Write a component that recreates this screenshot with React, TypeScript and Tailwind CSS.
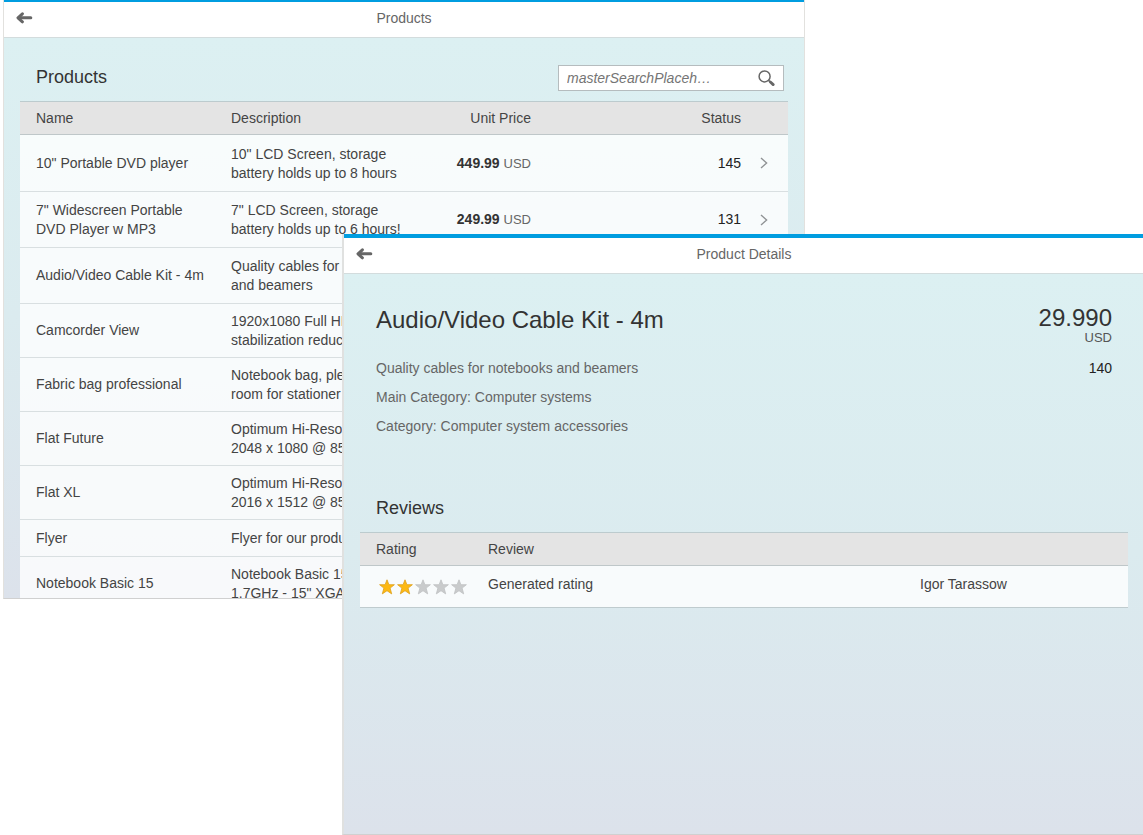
import type { ReactNode } from "react";

type Product = {
  name: string[];
  description: string[];
  price?: string;
  status?: number;
  height: string;
};

const products: Product[] = [
  { name: ['10" Portable DVD player'], description: ['10" LCD Screen, storage', "battery holds up to 8 hours"], price: "449.99", status: 145, height: "h-[57px]" },
  { name: ['7" Widescreen Portable', "DVD Player w MP3"], description: ['7" LCD Screen, storage', "battery holds up to 6 hours!"], price: "249.99", status: 131, height: "h-[56px]" },
  { name: ["Audio/Video Cable Kit - 4m"], description: ["Quality cables for", "and beamers"], height: "h-[56px]" },
  { name: ["Camcorder View"], description: ["1920x1080 Full HD", "stabilization reduc"], height: "h-[54px]" },
  { name: ["Fabric bag professional"], description: ["Notebook bag, ple", "room for stationer"], height: "h-[54px]" },
  { name: ["Flat Future"], description: ["Optimum Hi-Reso", "2048 x 1080 @ 85"], height: "h-[54px]" },
  { name: ["Flat XL"], description: ["Optimum Hi-Reso", "2016 x 1512 @ 85"], height: "h-[54px]" },
  { name: ["Flyer"], description: ["Flyer for our produ"], height: "h-[37px]" },
  { name: ["Notebook Basic 15"], description: ["Notebook Basic 15", '1.7GHz - 15" XGA'], height: "h-[54px]" },
];

function Lines({ lines }: { lines: string[] }) {
  return (
    <>
      {lines.map((line) => (
        <span key={line} className="block whitespace-nowrap">{line}</span>
      ))}
    </>
  );
}

function BackArrow() {
  return (
    <svg width="17" height="12" viewBox="0 0 17 12" fill="none" stroke="#666" strokeWidth="3" strokeLinecap="round" strokeLinejoin="round">
      <path d="M3 5.8H14.8" />
      <path d="M6.4 1.8L2 5.8L6.4 9.8" />
    </svg>
  );
}

function Window({ title, bar, className, children }: { title: string; bar: string; className: string; children: ReactNode }) {
  return (
    <section className={`flex min-h-0 flex-col overflow-hidden border-b border-b-[#d0d0d0] ${className}`}>
      <header className={`grid shrink-0 grid-cols-[1fr_auto_1fr] items-center border-b border-b-[#d3dcdd] border-t-[#009de0] bg-white ${bar}`}>
        <button type="button" aria-label="Back" className="ml-3 flex h-[35px] w-8 items-center pb-1">
          <BackArrow />
        </button>
        <h2 className="pb-1 text-sm text-[#666]">{title}</h2>
      </header>
      <div className="min-h-0 flex-1 bg-linear-to-b from-[#dcf0f2] via-[#dbebef] to-[#dce2eb] px-4">{children}</div>
    </section>
  );
}

const headCell = "h-[34px] border-y border-t-[#bccbce] border-b-[#bfc7c9] bg-[#e4e4e4] p-0 pt-px font-normal text-[#444]";
const bodyCell = "border-b border-[#d9dfe1] bg-white/80 p-0";
const reviewCell = "border-b border-[#bfcbce] bg-white/80 p-0 pb-1 pl-4";

function ProductsTable() {
  return (
    <table className="w-full table-fixed border-separate border-spacing-0 text-sm leading-[19px] text-[#444]">
      <colgroup>
        <col className="w-[195px]" />
        <col className="w-[196px]" />
        <col className="w-[120px]" />
        <col />
        <col className="w-[47px]" />
      </colgroup>
      <thead>
        <tr>
          <th className={`${headCell} pl-4 text-left`}>Name</th>
          <th className={`${headCell} pl-4 text-left`}>Description</th>
          <th className={`${headCell} text-right`}>Unit Price</th>
          <th className={`${headCell} text-right`}>Status</th>
          <th className={headCell} aria-label="Open" />
        </tr>
      </thead>
      <tbody>
        {products.map((p) => (
          <tr key={p.name[0]} className={p.height}>
            <td className={`${bodyCell} pl-4`}><Lines lines={p.name} /></td>
            <td className={`${bodyCell} pt-px pl-4`}><Lines lines={p.description} /></td>
            <td className={`${bodyCell} text-right`}>
              {p.price && (
                <>
                  <b className="text-[#333]">{p.price}</b> <span className="text-[13px] text-[#666]">USD</span>
                </>
              )}
            </td>
            <td className={`${bodyCell} text-right text-[#222]`}>{p.status}</td>
            <td className={`${bodyCell} pl-[19px]`}>
              <svg width="8" height="12" viewBox="0 0 8 12" fill="none" stroke="#8f9294" strokeWidth="1.4">
                <path d="M1 1L6.6 6L1 11" />
              </svg>
            </td>
          </tr>
        ))}
      </tbody>
    </table>
  );
}

function Rating({ value }: { value: number }) {
  return (
    <div role="img" aria-label={`${value} of 5 stars`} className="flex gap-0.5 pt-1 pl-[3px]">
      {[1, 2, 3, 4, 5].map((n) => (
        <svg key={n} width="16" height="16" viewBox="0 0 16 16" fill={n <= value ? "#fdb913" : "#c9cbcc"} stroke={n <= value ? "#dda01c" : "#bfc2c3"} strokeWidth="0.8">
          <path d="M8 0.8L9.9 5.7H15.4L11.1 9.1L12.7 14.9L8 11.7L3.3 14.9L4.9 9.1L0.6 5.7H6.1Z" />
        </svg>
      ))}
    </div>
  );
}

export default function App() {
  return (
    <main className="grid h-screen min-h-[700px] min-w-[1000px] grid-cols-[338px_1fr_338px] grid-rows-[234px_1fr_236px] overflow-hidden bg-white font-['Liberation_Sans',Arial,sans-serif]">
      <Window title="Products" bar="border-t-2" className="col-span-2 col-start-1 row-span-2 row-start-1 ml-[3px] border-x border-x-[#e2e1de]">
        <div className="flex items-center justify-between pt-[27px] pr-1 pb-2.5 pl-4">
          <h1 className="pb-0.5 text-lg leading-6 text-[#333]">Products</h1>
          <form role="search" className="flex h-[26px] w-[226px] items-center border border-[#b5bcbe] bg-white">
            <input
              type="search"
              aria-label="Search products"
              placeholder="masterSearchPlaceh…"
              className="min-w-0 flex-1 bg-transparent pl-2 text-sm italic outline-none placeholder:text-[#757575]"
            />
            <button type="button" aria-label="Search" className="mr-2 shrink-0">
              <svg width="17" height="17" viewBox="0 0 17 17" fill="none" stroke="#666">
                <circle cx="6.6" cy="6.4" r="5.5" strokeWidth="1.5" />
                <path d="M10.6 10.4L12.4 12.2" strokeWidth="1.5" />
                <path d="M12.4 12L15.2 14.6" strokeWidth="2.8" strokeLinecap="round" />
              </svg>
            </button>
          </form>
        </div>
        <ProductsTable />
      </Window>

      <Window title="Product Details" bar="border-t-4" className="z-10 col-span-2 col-start-2 row-span-2 row-start-2 ml-1 -mr-px border-l-2 border-l-[#e0e1e0]">
        <div className="flex justify-between px-4 pt-8">
          <div>
            <h1 className="pb-5 text-2xl leading-7 text-[#333]">Audio/Video Cable Kit - 4m</h1>
            <div className="text-sm leading-[29px] text-[#666]">
              <p>Quality cables for notebooks and beamers</p>
              <p>Main Category: Computer systems</p>
              <p>Category: Computer system accessories</p>
            </div>
          </div>
          <div className="text-right">
            <p className="text-2xl leading-6 text-[#333]">29.990</p>
            <p className="pb-2 text-[13px] leading-4 text-[#555]">USD</p>
            <p className="text-sm leading-[29px] text-[#222]">140</p>
          </div>
        </div>
        <h2 className="pt-[55px] pb-3 pl-4 text-lg leading-6 text-[#333]">Reviews</h2>
        <table className="w-full table-fixed border-separate border-spacing-0 text-sm leading-[19px] text-[#444]">
          <colgroup>
            <col className="w-[112px]" />
            <col />
            <col className="w-[224px]" />
          </colgroup>
          <thead>
            <tr>
              <th className={`${headCell} pl-4 text-left`}>Rating</th>
              <th className={`${headCell} pl-4 text-left`}>Review</th>
              <th className={headCell} aria-label="Author" />
            </tr>
          </thead>
          <tbody>
            <tr className="h-[42px]">
              <td className={reviewCell}><Rating value={2} /></td>
              <td className={reviewCell}>Generated rating</td>
              <td className={reviewCell}>Igor Tarassow</td>
            </tr>
          </tbody>
        </table>
      </Window>
    </main>
  );
}
